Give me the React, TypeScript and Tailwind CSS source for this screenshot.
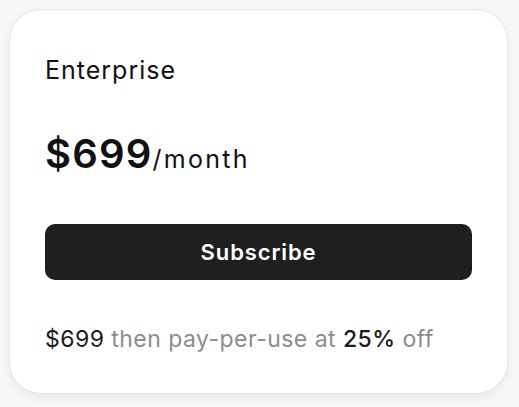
export default function App() {
  return (
    <div className="min-h-screen bg-[#f7f7f7] p-[9px] pr-[11px]" style={{ fontFamily: "Inter, 'Noto Sans', sans-serif" }}>
      <div className="rounded-[32px] border border-[#e6e6e6] bg-white px-[35px] pt-[44px] pb-[40px] shadow-[0_4px_10px_rgba(0,0,0,0.06)]">
        <h2 className="text-[25px] leading-[32px] font-normal tracking-[0.04em] text-[#111]">Enterprise</h2>
        <div className="mt-[48px] flex items-baseline text-[#111]">
          <span className="text-[40px] leading-[40px] font-semibold tracking-[0.03em]">$699</span>
          <span className="text-[25px] leading-[40px] font-normal tracking-[0.09em]">/month</span>
        </div>
        <button className="mt-[45px] h-[56px] w-full rounded-[10px] bg-[#1f1f1f] text-[22px] font-semibold tracking-[0.04em] text-white">
          Subscribe
        </button>
        <p className="mt-[45px] text-[23px] leading-[28px] tracking-[0.02em] text-[#8c8c8c]">
          <span className="text-[#1a1a1a]">$699</span> then pay-per-use at{" "}
          <span className="font-medium text-[#1a1a1a]">25%</span> off
        </p>
      </div>
    </div>
  );
}
